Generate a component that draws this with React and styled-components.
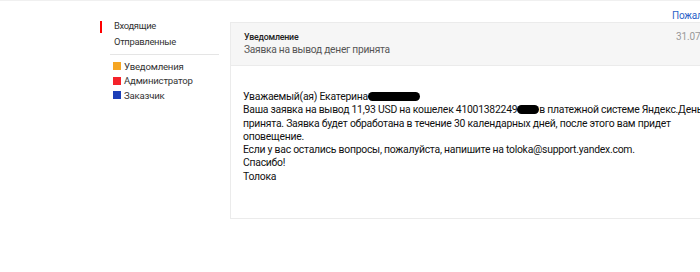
import styled, { createGlobalStyle } from 'styled-components'

const GlobalStyle = createGlobalStyle`
  html, body {
    margin: 0;
    padding: 0;
    background: #fff;
    overflow: hidden;
  }
  body {
    font-family: Roboto, "Noto Sans", sans-serif;
    color: #222;
  }
`

const Page = styled.div`
  width: 700px;
  height: 272px;
  border-top: 1px solid #f0f0f0;
  box-sizing: border-box;
  display: flex;
  gap: 11px;
  padding-left: 100px;
  overflow: hidden;
`

const Sidebar = styled.nav`
  width: 119px;
  flex: none;
  padding-top: 17px;
`

const Folder = styled.div`
  position: relative;
  height: 16px;
  line-height: 16px;
  padding-left: 14px;
  font-size: 9.4px;
  letter-spacing: -0.3px;
  color: #333;

  &::before {
    content: '';
    display: ${p => (p.$active ? 'block' : 'none')};
    position: absolute;
    left: 0;
    top: 3px;
    width: 2px;
    height: 12px;
    background: #f00;
  }
`

const Divider = styled.hr`
  margin: 4px 0 4px 10px;
  border: none;
  border-top: 1px solid #e5e5e5;
`

const Label = styled.div`
  display: flex;
  align-items: center;
  gap: 3px;
  height: 14.5px;
  padding-left: 13px;
  font-size: 9.6px;
  letter-spacing: -0.2px;
  color: #333;
`

const Swatch = styled.span`
  width: 8px;
  height: 8px;
  background: ${p => p.$color};
`

const Main = styled.main`
  flex: 1;
  min-width: 520px;
  display: flex;
  flex-direction: column;
`

const TopBar = styled.div`
  display: flex;
  height: 21px;
  padding: 9px 0 0 442px;
  box-sizing: border-box;
  white-space: nowrap;
`

const ReportLink = styled.a`
  font-size: 10px;
  letter-spacing: -0.2px;
  color: #2b5fc8;
  text-decoration: none;
`

const Card = styled.section`
  width: 520px;
  border: 1px solid #ebebeb;
  border-right: none;
`

const CardHeader = styled.header`
  position: relative;
  background: #f6f6f6;
  border-bottom: 1px solid #ebebeb;
  height: 43px;
  padding: 8px 0 0 13px;
  box-sizing: border-box;
`

const Kind = styled.div`
  font-size: 8.8px;
  font-weight: 500;
  letter-spacing: -0.2px;
  color: #222;
  line-height: 12px;
`

const Subject = styled.div`
  font-size: 10.2px;
  letter-spacing: -0.25px;
  color: #555;
  line-height: 14px;
`

const Date = styled.span`
  position: absolute;
  top: 8px;
  left: 445px;
  font-size: 10px;
  letter-spacing: -0.1px;
  color: #999;
  white-space: nowrap;
`

const Body = styled.div`
  height: 152px;
  padding: 24px 0 0 12px;
  box-sizing: border-box;
  font-size: 10.4px;
  letter-spacing: -0.25px;
  line-height: 13.3px;
  color: #111;
  white-space: nowrap;
`

const Blot = styled.span`
  display: inline-block;
  width: ${p => p.$w}px;
  height: 9px;
  vertical-align: -1px;
  background: #000;
  border-radius: 5px;
`

const App = () => {
  return (
    <>
      <GlobalStyle />
      <Page>
        <Sidebar>
          <Folder $active>Входящие</Folder>
          <Folder>Отправленные</Folder>
          <Divider />
          <Label><Swatch $color='#f6a623' />Уведомления</Label>
          <Label><Swatch $color='#f4222a' />Администратор</Label>
          <Label><Swatch $color='#1c3fb8' />Заказчик</Label>
        </Sidebar>
        <Main>
          <TopBar>
            <ReportLink href='#'>Пожаловаться</ReportLink>
          </TopBar>
          <Card>
            <CardHeader>
              <Kind>Уведомление</Kind>
              <Subject>Заявка на вывод денег принята</Subject>
              <Date>31.07.2018</Date>
            </CardHeader>
            <Body>
              Уважаемый(ая) Екатерина<Blot $w={52} /><br />
              Ваша заявка на вывод 11,93 USD на кошелек 41001382249<Blot $w={22} />в платежной системе Яндекс.Деньги<br />
              принята. Заявка будет обработана в течение 30 календарных дней, после этого вам придет<br />
              оповещение.<br />
              Если у вас остались вопросы, пожалуйста, напишите на toloka@support.yandex.com.<br />
              Спасибо!<br />
              Толока
            </Body>
          </Card>
        </Main>
      </Page>
    </>
  )
}

export default App
